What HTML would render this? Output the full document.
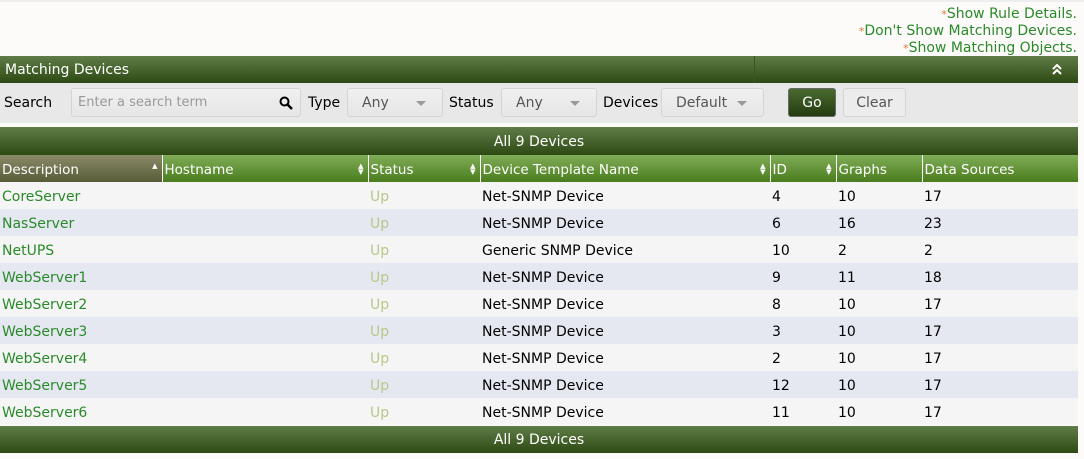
<!DOCTYPE html>
<html><head><style>
*{box-sizing:border-box;margin:0;padding:0}
body{width:1084px;height:459px;background:#fdfafa;font-family:"DejaVu Sans",Verdana,sans-serif;font-size:14px;color:#000;position:relative;overflow:hidden}
.top{position:absolute;top:0;left:0;width:1084px;height:2px;background:#eee}
.links{position:absolute;right:7px;top:6px;text-align:right;line-height:17px;font-size:14px;color:#2a8a2a}
.links span{color:#e07a3a;font-size:11px;vertical-align:top}
.bar{position:absolute;left:0;width:1078px;background:linear-gradient(#5f7d47,#2e4a14);color:#fff}
.hdr{top:56px;height:27px;line-height:29px;padding-left:5px}
.hdr .div{position:absolute;left:754px;top:0;width:1px;height:27px;background:#3a5520}
.filt{position:absolute;top:83px;left:0;width:1078px;height:40px;background:#e8e8e8}
.filt .l{position:absolute;top:12px}
.box{position:absolute;top:5px;height:29px;border:1px solid #d4d4d4;border-radius:3px;background:linear-gradient(#f0f0f0,#e6e6e6);color:#555;line-height:28px;padding-left:14px}
.box .ar{position:absolute;right:16px;top:12px;border-left:5px solid transparent;border-right:5px solid transparent;border-top:5px solid #999}
.go{position:absolute;top:5px;left:788px;width:48px;height:29px;border:1px solid #6a6a6a;border-radius:3px;background:linear-gradient(#4a6a30,#243c10);color:#fff;text-align:center;line-height:28px}
.clr{position:absolute;top:5px;left:843px;width:63px;height:29px;border:1px solid #d4d4d4;border-radius:3px;background:#ececec;color:#555;text-align:center;line-height:28px}
.cnt{height:28px;line-height:30px;text-align:center}
table{position:absolute;left:0;top:155px;width:1078px;border-collapse:collapse;table-layout:fixed}
th{height:27px;text-align:left;font-weight:normal;color:#fff;background:linear-gradient(#80ad58,#4a7c1e);border-left:1px solid #fff;padding-left:2px;padding-top:2px;position:relative;font-size:13.5px}
th:first-child{border-left:none;background:linear-gradient(#8a8a68,#575c38)}
th .s{position:absolute;right:4px;top:8px;font-size:7px;line-height:6px}
td{height:27px;padding-left:2px;padding-top:3px;white-space:nowrap}
tr.o td{background:#f5f5f5}
tr.e td{background:#e5e8f1}
td.n{color:#2a8a2a}
td.u{color:#b8c888}
</style></head><body>
<div class="top"></div>
<div class="links"><span>*</span>Show Rule Details.<br><span>*</span>Don't Show Matching Devices.<br><span>*</span>Show Matching Objects.</div>
<div class="bar hdr">Matching Devices<div class="div"></div><svg style="position:absolute;right:16px;top:8px" width="10" height="11" viewBox="0 0 10 11"><path d="M1 5L5 1L9 5M1 10L5 6L9 10" fill="none" stroke="#fff" stroke-width="2"/></svg></div>
<div class="filt">
<span class="l" style="left:4px">Search</span>
<div class="box" style="left:71px;width:230px;color:#999;padding-left:6px;font-size:13px">Enter a search term<svg style="position:absolute;right:7px;top:7px" width="14" height="14" viewBox="0 0 14 14"><circle cx="5.5" cy="5.5" r="4" fill="none" stroke="#000" stroke-width="2"/><path d="M8.5 8.5L13 13" stroke="#000" stroke-width="2.5"/></svg></div>
<span class="l" style="left:308px">Type</span>
<div class="box" style="left:347px;width:96px">Any<i class="ar"></i></div>
<span class="l" style="left:449px">Status</span>
<div class="box" style="left:501px;width:96px">Any<i class="ar"></i></div>
<span class="l" style="left:603px">Devices</span>
<div class="box" style="left:661px;width:103px">Default<i class="ar"></i></div>
<div class="go">Go</div><div class="clr">Clear</div>
</div>
<div class="bar cnt" style="top:127px">All 9 Devices</div>
<table>
<colgroup><col style="width:162px"><col style="width:206px"><col style="width:112px"><col style="width:290px"><col style="width:66px"><col style="width:86px"><col></colgroup>
<tr><th>Description<span class="s">&#9650;</span></th><th>Hostname<span class="s">&#9650;<br>&#9660;</span></th><th>Status<span class="s">&#9650;<br>&#9660;</span></th><th>Device Template Name<span class="s">&#9650;<br>&#9660;</span></th><th>ID<span class="s">&#9650;<br>&#9660;</span></th><th>Graphs</th><th>Data Sources</th></tr>
<tr class="o"><td class="n">CoreServer</td><td></td><td class="u">Up</td><td>Net-SNMP Device</td><td>4</td><td>10</td><td>17</td></tr>
<tr class="e"><td class="n">NasServer</td><td></td><td class="u">Up</td><td>Net-SNMP Device</td><td>6</td><td>16</td><td>23</td></tr>
<tr class="o"><td class="n">NetUPS</td><td></td><td class="u">Up</td><td>Generic SNMP Device</td><td>10</td><td>2</td><td>2</td></tr>
<tr class="e"><td class="n">WebServer1</td><td></td><td class="u">Up</td><td>Net-SNMP Device</td><td>9</td><td>11</td><td>18</td></tr>
<tr class="o"><td class="n">WebServer2</td><td></td><td class="u">Up</td><td>Net-SNMP Device</td><td>8</td><td>10</td><td>17</td></tr>
<tr class="e"><td class="n">WebServer3</td><td></td><td class="u">Up</td><td>Net-SNMP Device</td><td>3</td><td>10</td><td>17</td></tr>
<tr class="o"><td class="n">WebServer4</td><td></td><td class="u">Up</td><td>Net-SNMP Device</td><td>2</td><td>10</td><td>17</td></tr>
<tr class="e"><td class="n">WebServer5</td><td></td><td class="u">Up</td><td>Net-SNMP Device</td><td>12</td><td>10</td><td>17</td></tr>
<tr class="o"><td class="n">WebServer6</td><td></td><td class="u">Up</td><td>Net-SNMP Device</td><td>11</td><td>10</td><td>17</td></tr>
</table>
<div class="bar cnt" style="top:426px;height:27px;line-height:29px">All 9 Devices</div>
</body></html>
